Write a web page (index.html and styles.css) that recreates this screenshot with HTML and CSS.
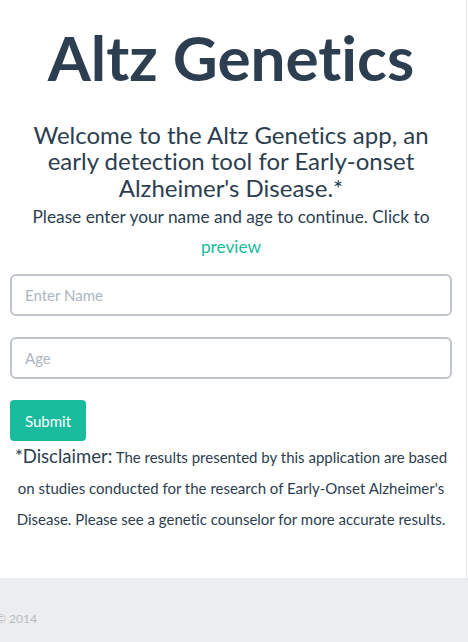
FILE: index.html
```html
<!DOCTYPE html>
<html lang="en">
<head>
<meta charset="utf-8">
<title>Altz Genetics</title>
<link rel="stylesheet" href="styles.css">
</head>
<body>
<main class="content">
  <h1 class="title">Altz Genetics</h1>
  <h3 class="welcome">Welcome to the Altz Genetics app, an early detection tool for Early-onset Alzheimer's Disease.*</h3>
  <p class="intro">Please enter your name and age to continue. Click to <a href="#" class="link">preview</a></p>
  <form class="form">
    <input class="field" type="text" placeholder="Enter Name">
    <input class="field" type="text" placeholder="Age">
    <button class="btn" type="button">Submit</button>
  </form>
  <p class="disclaimer"><span class="disclaimer-label">*Disclaimer:</span> The results presented by this application are based on studies conducted for the research of Early-Onset Alzheimer's Disease. Please see a genetic counselor for more accurate results.</p>
</main>
<footer class="footer">
  <p class="copy">© 2014</p>
</footer>
</body>
</html>
```

FILE: styles.css
```css
html, body {
  margin: 0;
  padding: 0;
  background: #ffffff;
}
body {
  font-family: Lato, "Open Sans", sans-serif;
  font-variant-ligatures: none;
  color: #2c3e50;
}
.content {
  box-sizing: border-box;
  width: 467px;
  height: 578px;
  padding: 0 14px 0 10px;
  border-right: 1px solid #e9e9e9;
  overflow: hidden;
}
.title {
  margin: 23px 0 0;
  font-size: 62px;
  line-height: 69px;
  font-weight: 700;
  text-align: center;
}
.welcome {
  margin: 30px 0 0;
  font-size: 24px;
  line-height: 1.1;
  font-weight: 400;
  text-align: center;
}
.intro {
  margin: 1px 0 0;
  font-size: 17.3px;
  line-height: 30px;
  text-align: center;
}
.link {
  color: #18bc9c;
  text-decoration: none;
}
.form {
  margin-top: 12px;
  display: flex;
  flex-direction: column;
  align-items: flex-start;
}
.field {
  box-sizing: border-box;
  width: 100%;
  height: 42px;
  margin: 0 0 21px;
  padding: 0 13px;
  border: 2px solid #c0c5ca;
  border-radius: 6px;
  font-family: Lato, sans-serif;
  font-size: 15px;
  color: #2c3e50;
  background: #fff;
  outline: none;
}
.field::placeholder {
  color: #acb6c0;
}
.btn {
  box-sizing: border-box;
  width: 76px;
  height: 41px;
  padding: 0;
  border: none;
  border-radius: 4px;
  background: #18bc9c;
  color: #ffffff;
  font-family: Lato, sans-serif;
  font-size: 15px;
}
.disclaimer {
  margin: 1px 0 0;
  font-size: 15px;
  line-height: 31px;
  text-align: center;
}
.disclaimer-label {
  font-size: 18.5px;
  line-height: 1;
}
.footer {
  box-sizing: border-box;
  height: 64px;
  background: #ecedef;
  padding-top: 32px;
}
.copy {
  margin: 0 0 0 -4px;
  font-size: 12px;
  line-height: 18px;
  color: #b4bcc2;
}
```
